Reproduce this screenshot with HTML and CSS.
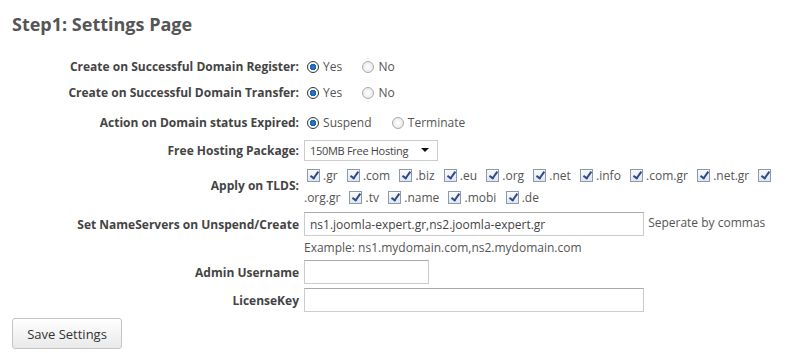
FILE: index.html
```html
<!DOCTYPE html>
<html lang="en">
<head>
  <meta charset="UTF-8" />
  <title>Step1: Settings Page</title>
  <link rel="stylesheet" href="styles.css">
</head>
<body>

  <h1>Step1: Settings Page</h1>

  <!-- Settings form -->
  <form class="settings">
    <div class="row r1">
      <label>Create on Successful Domain Register:</label>
      <div class="val">
        <span class="radio on"></span> Yes <span class="radio"></span> No
      </div>
    </div>
    <div class="row r2">
      <label>Create on Successful Domain Transfer:</label>
      <div class="val">
        <span class="radio on"></span> Yes <span class="radio"></span> No
      </div>
    </div>
    <div class="row r3">
      <label>Action on Domain status Expired:</label>
      <div class="val">
        <span class="radio on"></span> Suspend <span class="radio"></span> Terminate
      </div>
    </div>
    <div class="row r4">
      <label>Free Hosting Package:</label>
      <div class="val">
        <div class="select"><span>150MB Free Hosting</span> <span class="caret"></span></div>
      </div>
    </div>
    <div class="row r5">
      <label>Apply on TLDS:</label>
      <div class="val tlds">
        <span class="check"></span> .gr <span class="check"></span> .com <span class="check"></span> .biz <span class="check"></span> .eu <span class="check"></span> .org <span class="check"></span> .net <span class="check"></span> .info <span class="check"></span> .com.gr <span class="check"></span> .net.gr <span class="check"></span> .org.gr <span class="check"></span> .tv <span class="check"></span> .name <span class="check"></span> .mobi <span class="check"></span> .de
      </div>
    </div>
    <div class="row r6">
      <label>Set NameServers on Unspend/Create</label>
      <div class="val">
        <input type="text" class="wide" value="ns1.joomla-expert.gr,ns2.joomla-expert.gr" />
        <span class="hint">Seperate by commas</span>
      </div>
    </div>
    <div class="row r6b">
      <label></label>
      <div class="val">Example: ns1.mydomain.com,ns2.mydomain.com</div>
    </div>
    <div class="row r7">
      <label>Admin Username</label>
      <div class="val"><input type="text" class="short" /></div>
    </div>
    <div class="row r8">
      <label>LicenseKey</label>
      <div class="val"><input type="text" class="wide" /></div>
    </div>
  </form>

  <button class="save">Save Settings</button>

</body>
</html>
```

FILE: styles.css
```css
body {
  margin: 0;
  padding: 0 12px;
  font-family: "Open Sans", "Noto Sans", sans-serif;
  font-size: 12px;
  color: #555;
  background: #fff;
}
h1 {
  margin: 0;
  padding-top: 12px;
  height: 41px;
  font-size: 18px;
  font-weight: bold;
  color: #555;
}
.settings {
  width: 768px;
}
.row {
  display: grid;
  grid-template-columns: 287px 1fr;
  column-gap: 5px;
  align-items: center;
}
.row label {
  text-align: right;
  font-weight: bold;
  color: #444;
}
.r1 { height: 26px; }
.r2 { height: 26px; }
.r3 { height: 34px; }
.r4 { height: 22px; }
.r5 { height: 49px; }
.r6 { height: 28px; }
.r6b { height: 19px; }
.r7 { height: 30px; }
.r8 { height: 26px; }

.val {
  color: #555;
}
.radio {
  display: inline-block;
  width: 10px;
  height: 10px;
  border: 1px solid #aaa;
  border-radius: 50%;
  background: radial-gradient(circle, #fff 0%, #e4e4e4 100%);
  vertical-align: -2px;
  margin: 0 1px 0 3px;
}
.val .radio:nth-of-type(2) {
  margin-left: 17px;
}
.radio.on {
  border-color: #333;
  background: radial-gradient(circle, #2a7fd0 0, #1560b0 3px, #fff 3.5px, #f0f0f0 100%);
}
.select {
  display: inline-flex;
  align-items: center;
  justify-content: space-between;
  box-sizing: border-box;
  width: 134px;
  height: 21px;
  padding: 0 8px 0 5px;
  border: 1px solid #ccc;
  background: #fff;
  color: #444;
  white-space: nowrap;
  font-size: 11px;
  letter-spacing: -0.3px;
}
.caret {
  width: 0;
  height: 0;
  border-left: 4px solid transparent;
  border-right: 4px solid transparent;
  border-top: 4px solid #111;
}
.tlds {
  line-height: 22px;
  padding-top: 2px;
}
.check {
  display: inline-block;
  box-sizing: border-box;
  width: 13px;
  height: 13px;
  border: 1px solid #8a9bb0;
  background: linear-gradient(#fafafa, #e2e6ec);
  vertical-align: -2px;
  margin-left: 6px;
  position: relative;
}
.tlds .check:first-child {
  margin-left: 3px;
}
.check::after {
  content: "";
  position: absolute;
  left: 4px;
  top: 0px;
  width: 3px;
  height: 7px;
  border-right: 2px solid #2c4a8c;
  border-bottom: 2px solid #2c4a8c;
  transform: rotate(35deg);
}
input[type="text"] {
  box-sizing: border-box;
  height: 24px;
  border: 1px solid #ccc;
  border-top-color: #aaa;
  padding: 0 5px;
  font-family: inherit;
  font-size: 12px;
  color: #444;
  vertical-align: middle;
}
input.wide { width: 340px; }
input.short { width: 125px; }
.hint {
  margin-left: 1px;
}
.save {
  margin-top: 5px;
  width: 110px;
  height: 31px;
  border: 1px solid #c4c4c4;
  border-radius: 3px;
  background: linear-gradient(#fff, #e9e9e9);
  font-family: inherit;
  font-size: 13px;
  color: #333;
}
```
